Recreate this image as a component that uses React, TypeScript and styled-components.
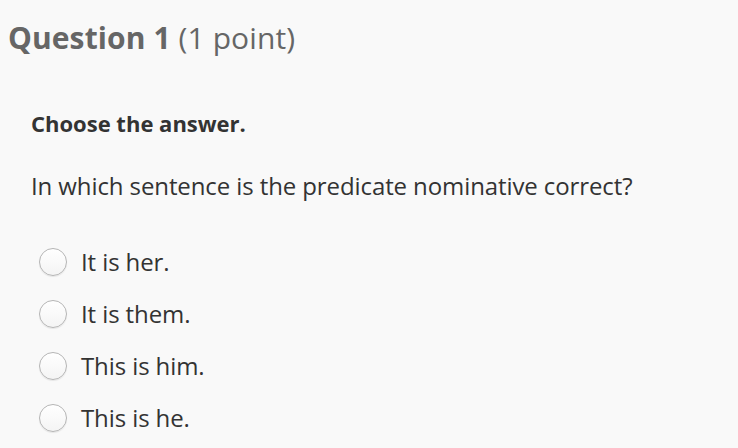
import styled, { createGlobalStyle } from "styled-components"

const GlobalStyle = createGlobalStyle`
  html, body {
    margin: 0;
    padding: 0;
    background: #f9f9f9;
  }
  body {
    font-family: "Open Sans", Lato, sans-serif;
    color: #333;
  }
`

const options = ["It is her.", "It is them.", "This is him.", "This is he."]

function App() {
  return (
    <>
      <GlobalStyle />
      <QuestionStyle>
        <h1 className="title">
          <strong>Question 1</strong> <span>(1 point)</span>
        </h1>
        <div className="body">
          <p className="instruction">Choose the answer.</p>
          <p className="prompt">In which sentence is the predicate nominative correct?</p>
          <ul className="options">
            {options.map((option, index) => (
              <li key={index}>
                <Radio />
                <span>{option}</span>
              </li>
            ))}
          </ul>
        </div>
      </QuestionStyle>
    </>
  )
}

const QuestionStyle = styled.div`
  width: 738px;
  height: 448px;
  overflow: hidden;
  padding: 18px 0 0 8px;
  box-sizing: border-box;

  .title {
    margin: 0;
    font-size: 30px;
    font-weight: normal;
    color: #666;
    line-height: 40px;
    letter-spacing: 0.1px;
    strong {
      font-weight: bold;
    }
  }

  .body {
    padding-left: 23px;
  }

  .instruction {
    margin: 51px 0 0;
    font-size: 22px;
    font-weight: bold;
    line-height: 28px;
  }

  .prompt {
    margin: 34px 0 0;
    font-size: 24px;
    line-height: 30px;
    letter-spacing: -0.1px;
  }

  .options {
    list-style: none;
    margin: 46px 0 0;
    padding: 0 0 0 8px;
    display: flex;
    flex-direction: column;
    gap: 23px;

    li {
      display: flex;
      align-items: center;
      gap: 14px;
      font-size: 24px;
      line-height: 29px;
      letter-spacing: -0.1px;
    }
  }
`

const Radio = styled.span`
  display: inline-block;
  width: 28px;
  height: 28px;
  border-radius: 50%;
  box-sizing: border-box;
  border: 1px solid #b5b5b5;
  background: linear-gradient(#ffffff, #f4f4f4);
  box-shadow: inset 0 1px 1px rgba(255, 255, 255, 0.8), 0 1px 1px rgba(0, 0, 0, 0.08);
`

export default App
